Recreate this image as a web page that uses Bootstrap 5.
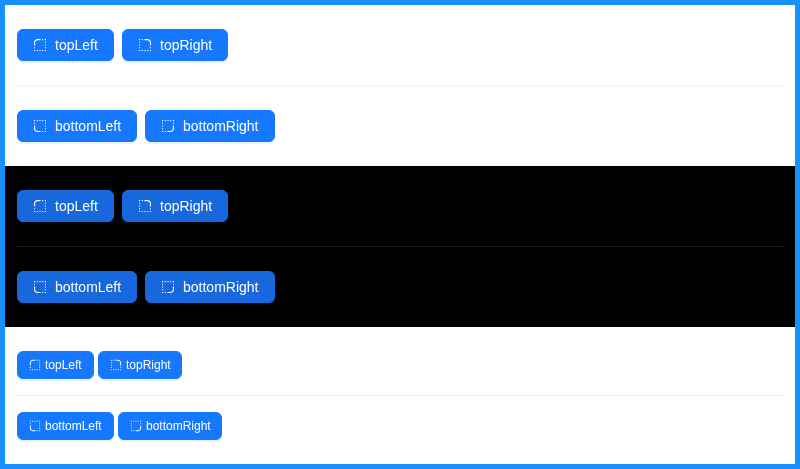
<!DOCTYPE html>
<html lang="en">
<head>
<meta charset="utf-8">
<meta name="viewport" content="width=device-width, initial-scale=1">
<title>Radius buttons</title>
<link href="https://cdn.jsdelivr.net/npm/bootstrap@5.3.0/dist/css/bootstrap.min.css" rel="stylesheet">
<style>
body { font-family: "Liberation Sans", Arial, sans-serif; background: #fff; }
.frame { border: 5px solid #1890ff; height: 469px; }
.panel { --gap: 8px; --split: 24px; --line: rgba(5,5,5,.06); padding: 24px 12px; }
.panel-dark { --line: rgba(253,253,253,.12); background: #000; }
.panel-compact { --gap: 4px; --split: 16px; }
.btn-line { display: flex; gap: var(--gap); }
.split { height: 1px; margin: var(--split) 0; border: 0; opacity: 1; background: var(--line); }
.btn-primary {
  --bs-btn-bg: #1677ff; --bs-btn-border-color: #1677ff;
  --bs-btn-hover-bg: #4096ff; --bs-btn-hover-border-color: #4096ff;
  --bs-btn-active-bg: #0958d9; --bs-btn-active-border-color: #0958d9;
  --bs-btn-font-size: 14px; --bs-btn-line-height: 22px;
  --bs-btn-padding-x: 15px; --bs-btn-padding-y: 4px; --bs-btn-border-radius: 6px;
  gap: var(--gap); box-shadow: 0 2px 0 rgba(5,145,255,.1);
}
.panel-dark .btn-primary { --bs-btn-bg: #1668dc; --bs-btn-border-color: #1668dc; box-shadow: 0 2px 0 rgba(0,60,180,.1); }
.panel-compact .btn-primary { --bs-btn-font-size: 12px; --bs-btn-line-height: 20px; --bs-btn-padding-x: 11px; --bs-btn-padding-y: 3px; }
.btn-primary span { will-change: transform; }
.glyph { width: 1em; height: 1em; fill: currentColor; }
</style>
</head>
<body>
<svg class="d-none" aria-hidden="true">
  <defs>
    <path id="dot" d="M8 0h56c4.400 0 8 3.600 8 8v56c0 4.400-3.600 8-8 8H8c-4.400 0-8-3.600-8-8V8c0-4.400 3.600-8 8-8z"/>
    <g id="blp">
      <path d="M540 824H358c-87.300 0-158-70.700-158-158V484c0-4.400-3.600-8-8-8h-56c-4.400 0-8 3.600-8 8v182c0 127 103 230 230 230h182c4.400 0 8-3.600 8-8v-56c0-4.400-3.600-8-8-8z"/>
      <use href="#dot" x="128" y="128"/><use href="#dot" x="302" y="128"/><use href="#dot" x="476" y="128"/><use href="#dot" x="650" y="128"/><use href="#dot" x="824" y="128"/>
      <use href="#dot" x="128" y="302"/><use href="#dot" x="824" y="302"/><use href="#dot" x="824" y="476"/><use href="#dot" x="824" y="650"/><use href="#dot" x="824" y="824"/><use href="#dot" x="650" y="824"/>
    </g>
  </defs>
  <symbol id="bl" viewBox="64 64 896 896"><use href="#blp"/></symbol>
  <symbol id="br" viewBox="64 64 896 896"><use href="#blp" transform="matrix(-1 0 0 1 1024 0)"/></symbol>
  <symbol id="tl" viewBox="64 64 896 896"><use href="#blp" transform="matrix(1 0 0 -1 0 1024)"/></symbol>
  <symbol id="tr" viewBox="64 64 896 896"><use href="#blp" transform="matrix(-1 0 0 -1 1024 1024)"/></symbol>
</svg>
<main class="frame">
  <section class="panel">
    <div class="btn-line">
      <button type="button" class="btn btn-primary d-inline-flex align-items-center"><svg class="glyph"><use href="#tl"/></svg><span>topLeft</span></button>
      <button type="button" class="btn btn-primary d-inline-flex align-items-center"><svg class="glyph"><use href="#tr"/></svg><span>topRight</span></button>
    </div>
    <hr class="split">
    <div class="btn-line">
      <button type="button" class="btn btn-primary d-inline-flex align-items-center"><svg class="glyph"><use href="#bl"/></svg><span>bottomLeft</span></button>
      <button type="button" class="btn btn-primary d-inline-flex align-items-center"><svg class="glyph"><use href="#br"/></svg><span>bottomRight</span></button>
    </div>
  </section>
  <section class="panel panel-dark">
    <div class="btn-line">
      <button type="button" class="btn btn-primary d-inline-flex align-items-center"><svg class="glyph"><use href="#tl"/></svg><span>topLeft</span></button>
      <button type="button" class="btn btn-primary d-inline-flex align-items-center"><svg class="glyph"><use href="#tr"/></svg><span>topRight</span></button>
    </div>
    <hr class="split">
    <div class="btn-line">
      <button type="button" class="btn btn-primary d-inline-flex align-items-center"><svg class="glyph"><use href="#bl"/></svg><span>bottomLeft</span></button>
      <button type="button" class="btn btn-primary d-inline-flex align-items-center"><svg class="glyph"><use href="#br"/></svg><span>bottomRight</span></button>
    </div>
  </section>
  <section class="panel panel-compact">
    <div class="btn-line">
      <button type="button" class="btn btn-primary d-inline-flex align-items-center"><svg class="glyph"><use href="#tl"/></svg><span>topLeft</span></button>
      <button type="button" class="btn btn-primary d-inline-flex align-items-center"><svg class="glyph"><use href="#tr"/></svg><span>topRight</span></button>
    </div>
    <hr class="split">
    <div class="btn-line">
      <button type="button" class="btn btn-primary d-inline-flex align-items-center"><svg class="glyph"><use href="#bl"/></svg><span>bottomLeft</span></button>
      <button type="button" class="btn btn-primary d-inline-flex align-items-center"><svg class="glyph"><use href="#br"/></svg><span>bottomRight</span></button>
    </div>
  </section>
</main>
<script src="https://cdn.jsdelivr.net/npm/bootstrap@5.3.0/dist/js/bootstrap.bundle.min.js"></script>
</body>
</html>
